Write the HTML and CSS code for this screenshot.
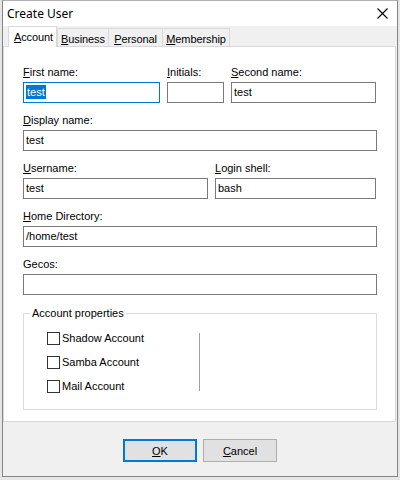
FILE: index.html
```html
<!DOCTYPE html>
<html>
<head>
<meta charset="utf-8">
<link rel="stylesheet" href="styles.css">
</head>
<body>
<div class="window">
  <div class="titlebar">
    <span class="title">Create User</span>
    <svg class="close" width="11" height="11" viewBox="0 0 11 11"><path d="M0.5 0.5 L10.5 10.5 M10.5 0.5 L0.5 10.5" stroke="#000" stroke-width="1.1" fill="none"/></svg>
  </div>
  <div class="tabs">
    <div class="tab sel"><span><u>A</u>ccount</span></div>
    <div class="tab first"><span><u>B</u>usiness</span></div>
    <div class="tab t-personal"><span><u>P</u>ersonal</span></div>
    <div class="tab t-member"><span><u>M</u>embership</span></div>
  </div>
  <div class="panel">
    <div class="row r3">
      <div class="fld"><div class="lbl"><u>F</u>irst name:</div><div class="inp focus"><span class="selected">test</span></div></div>
      <div class="fld"><div class="lbl"><u>I</u>nitials:</div><div class="inp"></div></div>
      <div class="fld"><div class="lbl"><u>S</u>econd name:</div><div class="inp">test</div></div>
    </div>
    <div class="row">
      <div class="fld"><div class="lbl"><u>D</u>isplay name:</div><div class="inp">test</div></div>
    </div>
    <div class="row r2">
      <div class="fld"><div class="lbl"><u>U</u>sername:</div><div class="inp">test</div></div>
      <div class="fld"><div class="lbl"><u>L</u>ogin shell:</div><div class="inp">bash</div></div>
    </div>
    <div class="row">
      <div class="fld"><div class="lbl"><u>H</u>ome Directory:</div><div class="inp">/home/test</div></div>
    </div>
    <div class="row">
      <div class="fld"><div class="lbl">Gecos:</div><div class="inp"></div></div>
    </div>
    <fieldset class="group">
      <legend>Account properties</legend>
      <div class="group-body">
        <div class="checks">
          <div class="chk"><span class="box"></span><span>Shadow Account</span></div>
          <div class="chk"><span class="box"></span><span>Samba Account</span></div>
          <div class="chk"><span class="box"></span><span>Mail Account</span></div>
        </div>
        <div class="vline"></div>
      </div>
    </fieldset>
  </div>
  <div class="footer">
    <div class="btn default"><span><u>O</u>K</span></div>
    <div class="btn"><span><u>C</u>ancel</span></div>
  </div>
</div>
</body>
</html>
```

FILE: styles.css
```css
* { box-sizing: border-box; }
html, body { margin: 0; padding: 0; }
body {
  width: 400px;
  height: 480px;
  background: #e6e6e6;
  font-family: "Liberation Sans", Arial, sans-serif;
  font-size: 11px;
  color: #000;
}
u { text-decoration: underline; text-underline-offset: 1px; }
.window {
  margin-left: 2px;
  width: 396px;
  height: 477px;
  border: 1px solid #858585;
  border-top-color: #b0b0b0;
  background: #f0f0f0;
  display: flex;
  flex-direction: column;
}
.titlebar {
  height: 25px;
  flex: none;
  background: #fff;
  display: flex;
  align-items: center;
  justify-content: space-between;
  padding: 0 9px 1px 4px;
}
.title {
  font-family: "Noto Sans", "Open Sans", sans-serif;
  font-size: 12px;
}
.close { display: block; }
.tabs {
  flex: none;
  height: 20px;
  display: flex;
  align-items: flex-end;
  padding-left: 5px;
  position: relative;
  z-index: 2;
}
.tab {
  height: 18px;
  border-top: 1px solid #d9d9d9;
  border-right: 1px solid #d9d9d9;
  background: #f0f0f0;
  display: flex;
  justify-content: center;
  padding-top: 4px;
  line-height: 13px;
  letter-spacing: -0.1px;
}
.tab.first { width: 52px; border-left: 1px solid #d9d9d9; }
.tab.t-personal { width: 54px; }
.tab.t-member { width: 67px; }
.tab.sel {
  width: 49px;
  height: 21px;
  margin-bottom: -1px;
  background: #fff;
  border: 1px solid #d9d9d9;
  border-bottom: none;
  padding: 4px 0 0 2px;
}
.panel {
  flex: 1;
  margin-right: 1px;
  background: #fff;
  border: 1px solid #d9d9d9;
  padding: 19px 18px 0 19px;
  position: relative;
  z-index: 1;
}
.row {
  display: flex;
  margin-bottom: 11px;
}
.row .fld { flex: 1; }
.r3 { gap: 7px; }
.r3 .fld:nth-child(1) { flex: none; width: 137px; }
.r3 .fld:nth-child(2) { flex: none; width: 57px; }
.r3 .fld:nth-child(3) { flex: none; width: 145px; }
.r2 { gap: 7px; }
.r2 .fld:nth-child(1) { flex: none; width: 185px; }
.r2 .fld:nth-child(2) { flex: none; width: 161px; }
.lbl {
  line-height: 13px;
  height: 13px;
  margin-bottom: 3px;
  white-space: nowrap;
}
.inp {
  height: 21px;
  border: 1px solid #7a7a7a;
  background: #fff;
  padding: 0 2px;
  line-height: 19px;
  white-space: nowrap;
}
.inp.focus { border-color: #0078d7; }
.selected {
  background: #0078d7;
  color: #fff;
  display: inline-block;
  line-height: 14px;
  padding: 0 1px;
  vertical-align: middle;
  margin-top: -2px;
}
.group {
  margin: 12px 0 0 0;
  padding: 0;
  border: 1px solid #dcdcdc;
  min-width: 0;
}
.group legend {
  margin-left: 6px;
  padding: 0 2px;
  line-height: 13px;
}
.group-body {
  display: flex;
  padding: 12px 0 16px 23px;
}
.checks {
  width: 152px;
  display: flex;
  flex-direction: column;
  gap: 11px;
}
.chk {
  display: flex;
  align-items: center;
  height: 13px;
  line-height: 13px;
  gap: 2px;
  white-space: nowrap;
}
.box {
  width: 13px;
  height: 13px;
  border: 1px solid #333;
  background: #fff;
  flex: none;
}
.vline {
  width: 1px;
  height: 58px;
  margin-top: 1px;
  background: #a0a0a0;
}
.footer {
  flex: none;
  height: 54px;
  display: flex;
  justify-content: center;
  gap: 6px;
  padding-top: 17px;
}
.btn {
  width: 74px;
  height: 23px;
  border: 1px solid #adadad;
  background: #e1e1e1;
  display: flex;
  align-items: center;
  justify-content: center;
}
.btn.default { border: 2px solid #0078d7; }
```
